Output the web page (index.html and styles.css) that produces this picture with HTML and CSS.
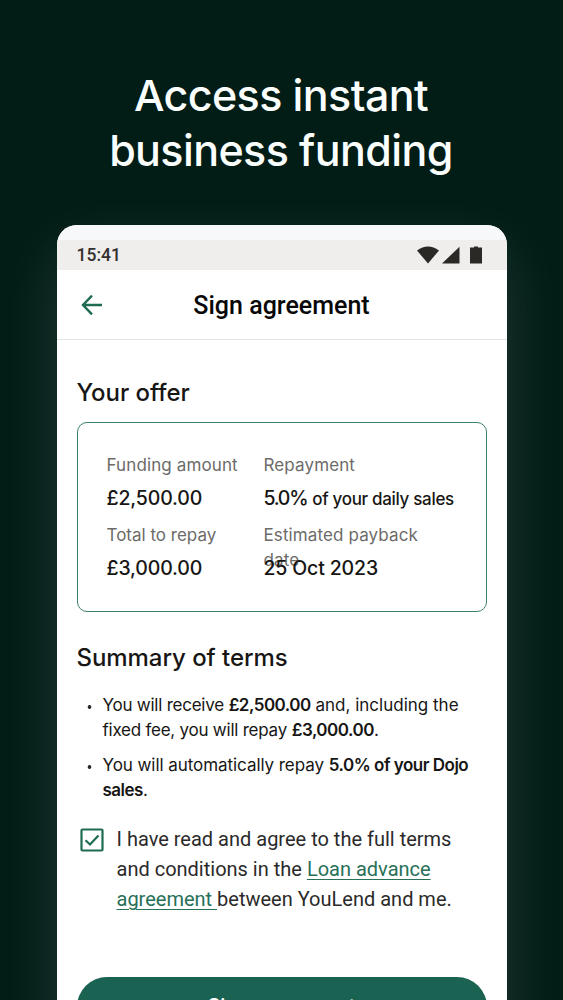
FILE: index.html
```html
<!DOCTYPE html>
<html lang="en">
<head>
  <meta charset="UTF-8">
  <meta name="viewport" content="width=device-width, initial-scale=1.0">
  <title>Sign agreement</title>
  <link rel="stylesheet" href="styles.css">
</head>
<body>
  <h1 class="headline">Access instant<br>business funding</h1>

  <main class="phone">
    <div class="status-bar">
      <span>15:41</span>
      <svg class="status-icons" width="67" height="20" viewBox="0 0 67 20" fill="#2b2926">
        <path d="M1 5.500Q12 -2.500 23 5.500L12 18.500Z"/>
        <path d="M43.500 1.800V18.500H26Z"/>
        <path d="M54 2.500H58V1.500H62V2.500H66V18.500H54Z"/>
      </svg>
    </div>

    <header class="top-bar">
      <svg class="back" width="22" height="22" viewBox="0 0 22 22" fill="none" stroke="#1f6b54" stroke-width="2.400">
        <path d="M11 1.700L2 11L11 20.300M2 11H21"/>
      </svg>
      <h2>Sign agreement</h2>
    </header>

    <div class="content">
      <h3>Your offer</h3>
      <dl class="offer">
        <div>
          <dt class="wide">Funding amount</dt>
          <dd>£2,500.00</dd>
        </div>
        <div>
          <dt class="wide">Repayment</dt>
          <dd><span class="rate">5.0%</span> <small>of your daily sales</small></dd>
        </div>
        <div>
          <dt>Total to repay</dt>
          <dd>£3,000.00</dd>
        </div>
        <div>
          <dt class="wide">Estimated payback date</dt>
          <dd>25 Oct 2023</dd>
        </div>
      </dl>

      <h3>Summary of terms</h3>
      <ul class="terms">
        <li><span class="tight">You will receive</span> <b>£2,500.00</b> and, including the<br><span class="tight">fixed fee, you will repay</span> <b>£3,000.00</b>.</li>
        <li><span class="close">You will automatically repay</span> <b>5.0% of your Dojo<br>sales</b>.</li>
      </ul>

      <div class="consent">
        <svg width="24" height="24" viewBox="0 0 24 24" fill="none" stroke="#1f6b54" stroke-width="2.200">
          <rect x="1.500" y="1.500" width="21" height="21" rx="1"/>
          <path d="M5.500 12.300L10 16.500L18.500 7.500"/>
        </svg>
        <p>I have read and agree to the full terms<br>and conditions in the <a href="#">Loan advance<br>agreement </a>between YouLend and me.</p>
      </div>

      <button class="sign">Sign agreement</button>
    </div>
  </main>
</body>
</html>
```

FILE: styles.css
```css
* {
  box-sizing: border-box;
}
body {
  margin: 0;
  height: 1000px;
  overflow: hidden;
  background: #021c16;
  font-family: Inter, "Liberation Sans", sans-serif;
  color: #171614;
}
h1, h2, h3, p, ul, dl, dd {
  margin: 0;
  padding: 0;
}
.headline {
  height: 225px;
  padding: 68px 1px 0 0;
  text-align: center;
  font-size: 43px;
  font-weight: 500;
  line-height: 55px;
  letter-spacing: -0.600px;
  color: #fbfffe;
}
.phone {
  width: 450px;
  height: 875px;
  margin: 0 auto;
  overflow: hidden;
  background: #fff;
  border-radius: 20px 20px 0 0;
  box-shadow: 0 24px 60px rgba(255, 255, 255, 0.13);
}
.status-bar {
  display: flex;
  justify-content: space-between;
  height: 45px;
  padding: 20px 24px 0 20px;
  background: linear-gradient(#f7f8f9 0 15px, #efeeec 15px);
  font: 500 17.500px/21px Roboto, sans-serif;
  color: #33312f;
}
.top-bar {
  display: grid;
  grid-template-columns: 22px 1fr 22px;
  align-items: center;
  height: 70px;
  padding: 0 24px;
  border-bottom: 1px solid #e2e5e8;
}
.top-bar h2 {
  padding-top: 2px;
  text-align: center;
  font: 500 25px/30px Roboto, sans-serif;
  color: #080808;
}
.content {
  padding: 38px 20px 0;
}
h3 {
  font-size: 24px;
  font-weight: 500;
  line-height: 30px;
  letter-spacing: -0.050px;
}
.offer {
  display: grid;
  grid-template-columns: 157px 1fr;
  grid-auto-rows: 70px;
  height: 190px;
  margin: 14px 0 31px;
  padding: 30px 29px 0;
  border: 1.500px solid #3d816b;
  border-radius: 10px;
}
/* labels keep one line of height, longer ones run under the value */
dt {
  max-width: 170px;
  height: 25px;
  font-size: 17px;
  line-height: 25px;
  color: #6c6b69;
}
.wide {
  letter-spacing: 0.120px;
}
dd {
  position: relative;
  padding-top: 7px;
  font-size: 19.500px;
  font-weight: 500;
  line-height: 26px;
  letter-spacing: -0.150px;
  white-space: nowrap;
}
.rate {
  letter-spacing: -1.300px;
}
dd small {
  font-size: 17px;
  letter-spacing: -0.320px;
}
.terms {
  margin-top: 20px;
  list-style: none;
  font-size: 17px;
  line-height: 25px;
  white-space: nowrap;
}
.terms li {
  margin-bottom: 10px;
  padding-left: 26px;
  background: radial-gradient(circle at 12.500px 14px, #282725 1.500px, transparent 2.200px);
}
.terms b {
  font-weight: 600;
  letter-spacing: -0.500px;
}
.tight {
  letter-spacing: -0.240px;
}
.close {
  letter-spacing: -0.060px;
}
.consent {
  display: flex;
  gap: 13px;
  margin-top: 21px;
  padding-left: 3px;
  font: 20px/30px Roboto, sans-serif;
  color: #2b2a2a;
  white-space: nowrap;
}
.consent svg {
  margin-top: 4px;
}
.consent a {
  color: #287058;
  text-underline-offset: 3px;
  text-decoration-thickness: 1px;
}
.sign {
  display: block;
  width: 100%;
  height: 60px;
  margin-top: 63px;
  padding: 0 0 2px;
  border: 0;
  border-radius: 30px;
  background: #1a6251;
  font: 500 20px/24px Inter, sans-serif;
  letter-spacing: -0.200px;
  color: #fff;
}
```
